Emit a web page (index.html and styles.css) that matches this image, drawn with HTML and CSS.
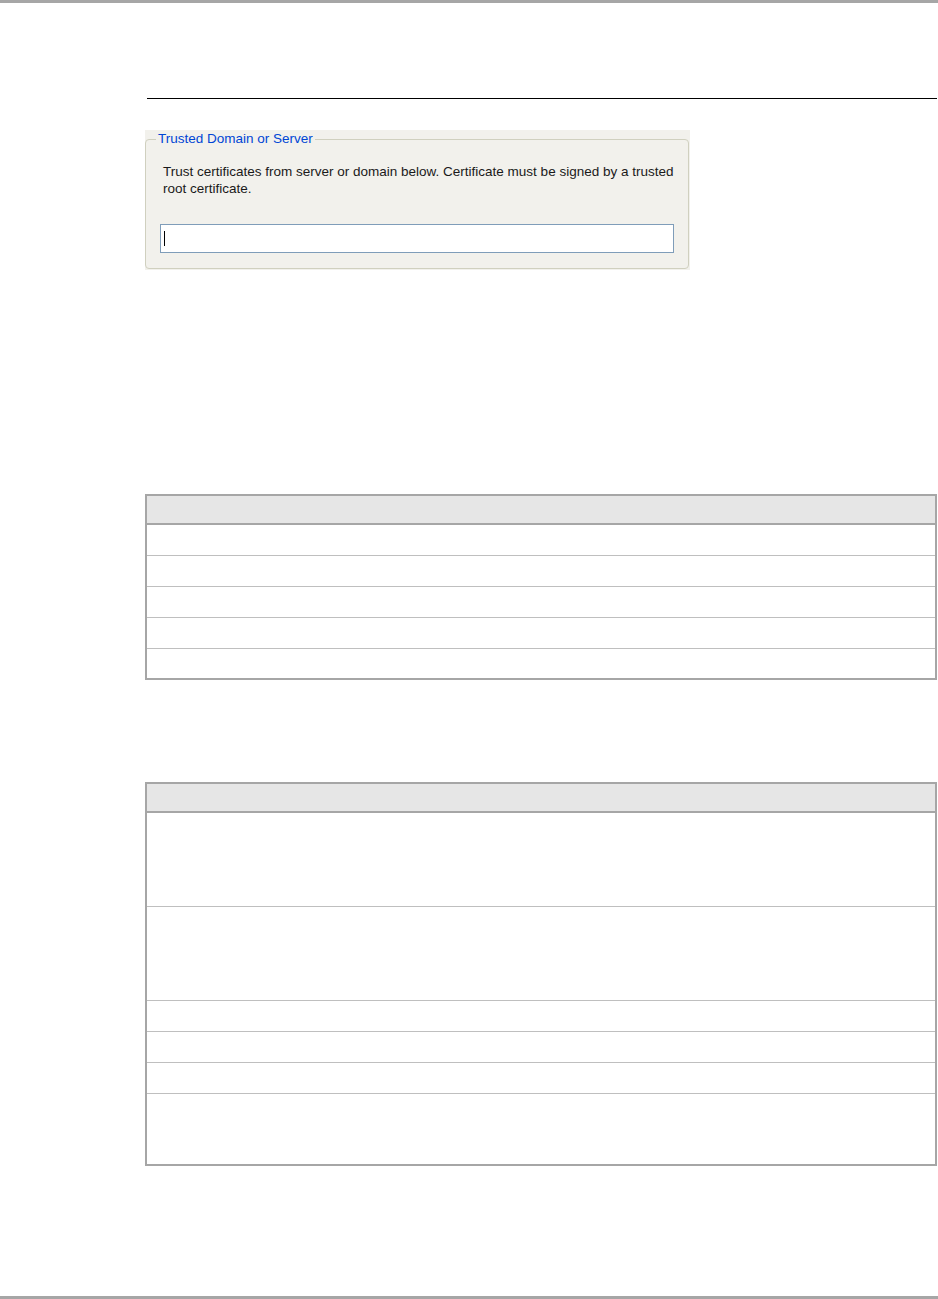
FILE: index.html
```html
<!DOCTYPE html>
<html lang="en">
<head>
<meta charset="utf-8">
<title>Trusted Domain or Server</title>
<link rel="stylesheet" href="styles.css">
</head>
<body>
<div class="page">
  <div class="top-bar"></div>
  <div class="rule"></div>

  <div class="shot">
    <fieldset class="group">
      <legend class="group-title">Trusted Domain or Server</legend>
      <p class="group-text">Trust certificates from server or domain below. Certificate must be signed by a trusted root certificate.</p>
      <div class="textbox"><span class="caret"></span></div>
    </fieldset>
  </div>

  <div class="table table-one">
    <div class="thead"></div>
    <div class="row r31"></div>
    <div class="row r31"></div>
    <div class="row r31"></div>
    <div class="row r31"></div>
    <div class="row r29 last"></div>
  </div>

  <div class="table table-two">
    <div class="thead"></div>
    <div class="row r94"></div>
    <div class="row r94"></div>
    <div class="row r31"></div>
    <div class="row r31"></div>
    <div class="row r31"></div>
    <div class="row r70 last"></div>
  </div>

  <div class="bottom-bar"></div>
</div>
</body>
</html>
```

FILE: styles.css
```css
html, body {
  margin: 0;
  padding: 0;
  background: #ffffff;
}

.page {
  width: 938px;
  height: 1299px;
  display: flex;
  flex-direction: column;
  font-family: "Liberation Sans", Arial, sans-serif;
}

.top-bar {
  height: 3px;
  background: #a6a6a6;
  flex: none;
}

.rule {
  flex: none;
  margin: 95px 1px 0 147px;
  height: 0;
  border-top: 1px solid #000000;
}

.shot {
  flex: none;
  box-sizing: border-box;
  width: 545px;
  height: 140px;
  margin: 31px 0 0 145px;
  padding: 1px 2px 0 0;
  background: #f2f1ec;
}

.group {
  margin: 0;
  box-sizing: border-box;
  height: 138px;
  border: 1px solid #d0d0bf;
  border-radius: 4px;
  padding: 0 14px 14px 14px;
}

.group-title {
  margin-left: -4px;
  padding: 0 2px;
  color: #0046d5;
  font-size: 13.5px;
  line-height: 16px;
}

.group-text {
  margin: 16px 0 0 0;
  padding-left: 3px;
  font-size: 13.5px;
  line-height: 17px;
  color: #1a1a1a;
}

.textbox {
  margin-top: 27px;
  box-sizing: border-box;
  width: 514px;
  height: 29px;
  border: 1px solid #7f9db9;
  background: #ffffff;
  padding: 6px 0 0 3px;
}

.caret {
  display: block;
  width: 1px;
  height: 15px;
  background: #000000;
}

.table {
  flex: none;
  box-sizing: border-box;
  width: 792px;
  margin-left: 145px;
  border: 2px solid #a6a6a6;
}

.table-one {
  margin-top: 224px;
}

.table-two {
  margin-top: 102px;
}

.thead {
  height: 27px;
  background: #e6e6e6;
  border-bottom: 2px solid #a6a6a6;
}

.row {
  border-bottom: 1px solid #bfbfbf;
}

.row.last {
  border-bottom: none;
}

.r29 { height: 29px; }
.r31 { height: 30px; }
.r94 { height: 93px; }
.r70 { height: 70px; }

.bottom-bar {
  margin-top: auto;
  height: 3px;
  background: #a6a6a6;
  flex: none;
}
```
